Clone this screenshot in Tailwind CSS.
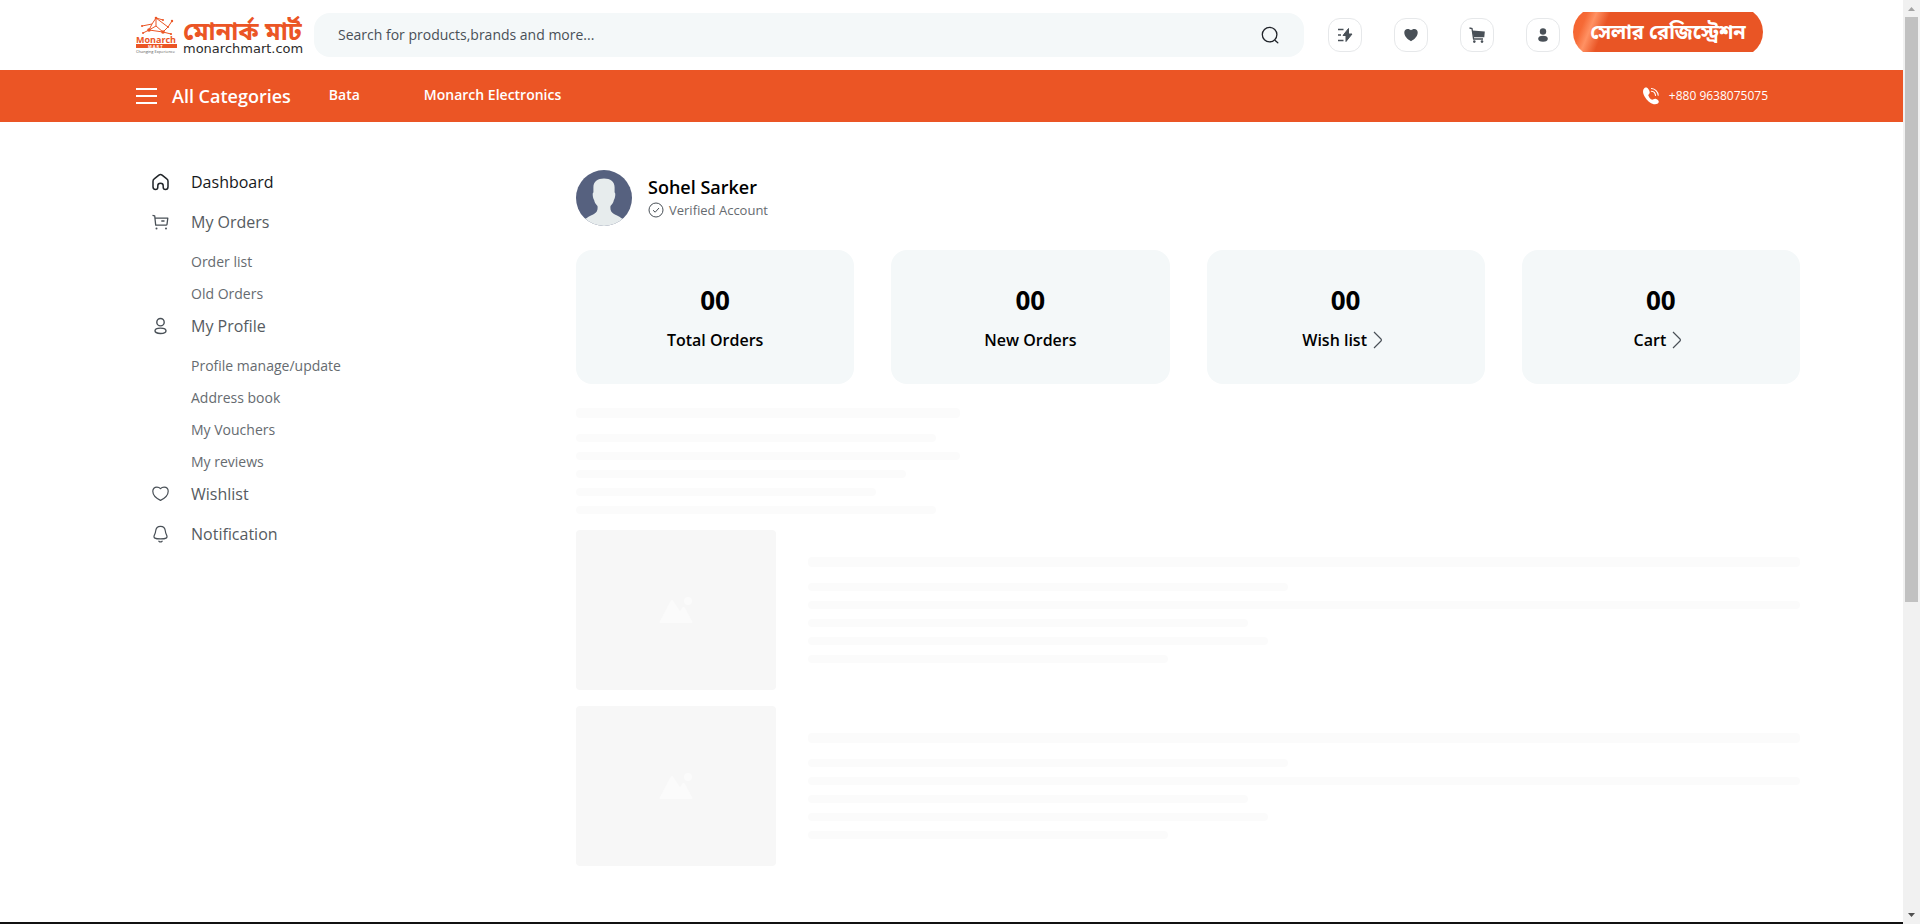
<!DOCTYPE html>
<html lang="en">
<head>
<meta charset="utf-8">
<meta name="viewport" content="width=device-width, initial-scale=1">
<title>Monarch Mart - Dashboard</title>
<script src="https://cdn.jsdelivr.net/npm/@tailwindcss/browser@4"></script>
</head>
<body class="bg-white font-['Open_Sans','Noto_Sans',sans-serif] text-black">
<div class="flex min-h-screen">
  <div class="flex min-w-0 flex-1 flex-col">

    <header class="flex h-[70px] items-center pl-[136px] pr-[140px]">
      <a href="#" aria-label="Monarch Mart home" class="shrink-0">
        <svg width="168" height="40" viewBox="0 0 168 40" class="block overflow-visible">
          <g stroke="#eb5525" fill="none" stroke-width="1">
            <path d="M6 11 L16 9 L20 3 L32 12 L36 6 M16 9 L13 15 L7 18 M13 15 L20 11 L27 17 L32 12 M20 3 L20 11 M27 17 L35 19 M13 15 L27 17 M20 3 L27 5"/>
          </g>
          <g fill="#eb5525">
            <circle cx="6" cy="11" r="1"/><circle cx="20" cy="3" r="1.3"/><circle cx="13" cy="15" r="1.8"/><circle cx="27" cy="17" r="1.8"/><circle cx="36" cy="6" r="1.2"/><circle cx="7" cy="18" r="1"/><circle cx="35" cy="19" r="1.1"/><circle cx="32" cy="12" r="1"/><circle cx="27" cy="5" r="1"/>
            <rect x="0" y="29" width="41" height="4"/>
          </g>
          <text x="0" y="28" font-family="Open Sans" font-size="9" font-weight="700" fill="#eb5525">Monarch</text>
          <text x="12" y="33" font-family="Open Sans" font-size="4" font-weight="700" fill="#fff">M A R T</text>
          <text x="0" y="38" font-family="Open Sans" font-size="4" fill="#555">Changing Experience</text>
          <text x="47" y="25" font-family="Noto Sans Bengali, Noto Sans, sans-serif" font-size="25" font-weight="700" fill="#eb5525">মোনার্ক মার্ট</text>
          <text x="47" y="38" font-family="DejaVu Sans" font-size="13" fill="#2b2b2b">monarchmart.com</text>
        </svg>
      </a>

      <form role="search" class="ml-[10px] flex h-11 min-w-0 flex-1 items-center rounded-2xl bg-[#f4f8f9] pl-6 pr-6">
        <input type="search" aria-label="Search" placeholder="Search for products,brands and more..." class="min-w-0 flex-1 bg-transparent text-sm text-[#495057] outline-none placeholder:text-[#495057]">
        <button type="button" aria-label="Search">
          <svg width="20" height="20" viewBox="0 0 20 20" fill="none" stroke="#1f2329" stroke-width="1.3" stroke-linecap="round" class="block"><circle cx="9.600" cy="9.600" r="7.300"/><path d="M15.200 15.600 L17.800 17.800"/></svg>
        </button>
      </form>

      <div class="ml-6 flex gap-8">
        <button type="button" aria-label="Flash deals" class="flex size-[34px] items-center justify-center rounded-xl border border-[#e6e8ea]">
          <svg width="16" height="16" viewBox="0 0 16 16" class="block"><path d="M11.500 1.500 L6 8.500 H9 V14.500 L15 7 H11.500 Z" fill="#495057" stroke="#495057" stroke-linejoin="round"/><path d="M1 2.500 H6.500 M1 8 H4 M1 13.500 H6.500" stroke="#495057" stroke-width="1.300"/></svg>
        </button>
        <button type="button" aria-label="Wishlist" class="flex size-[34px] items-center justify-center rounded-xl border border-[#e6e8ea]">
          <svg width="16" height="16" viewBox="0 0 16 16" class="block"><path d="M8 14.200 C4 12.200 1.300 9 1.300 5.600 C1.300 3.400 2.700 2 4.700 2 C6 2 7.200 2.600 8 3.300 C8.800 2.600 10 2 11.300 2 C13.300 2 14.700 3.400 14.700 5.600 C14.700 9 12 12.200 8 14.200 Z" fill="#495057"/></svg>
        </button>
        <button type="button" aria-label="Cart" class="flex size-[34px] items-center justify-center rounded-xl border border-[#e6e8ea]">
          <svg width="16" height="16" viewBox="0 0 16 16" class="block"><path d="M0.500 1 L3 1.500 L4.600 12 H14" fill="none" stroke="#495057" stroke-width="1.300"/><path d="M3.500 3.500 L15.800 4.500 L15.300 10.200 H4.500 Z" fill="#495057"/><circle cx="5.300" cy="14.600" r="1.300" fill="#495057"/><circle cx="13" cy="14.600" r="1.300" fill="#495057"/></svg>
        </button>
        <button type="button" aria-label="Account" class="flex size-[34px] items-center justify-center rounded-xl border border-[#e6e8ea]">
          <svg width="16" height="16" viewBox="0 0 16 16" class="block"><circle cx="8" cy="4.500" r="3.200" fill="#495057"/><ellipse cx="8" cy="11.700" rx="4.800" ry="3" fill="#495057"/></svg>
        </button>
      </div>

      <a href="#" class="mb-[6px] ml-[13px] shrink-0" aria-label="Seller registration">
        <svg width="190" height="40" viewBox="0 0 190 40" class="block">
          <defs><linearGradient id="shine" gradientUnits="userSpaceOnUse" x1="0" y1="0" x2="50" y2="20"><stop offset="0" stop-color="#f4602c"/><stop offset="0.250" stop-color="#f66a36"/><stop offset="0.410" stop-color="#ff9163"/><stop offset="0.650" stop-color="#e95525"/></linearGradient></defs>
          <path d="M10 0 H180 A25 25 0 0 1 180 40 H10 A25 25 0 0 1 10 0 Z" fill="url(#shine)"/>
          <text x="95" y="27" text-anchor="middle" font-family="Noto Sans Bengali, Noto Sans, sans-serif" font-size="20" font-weight="700" fill="#fff">সেলার রেজিস্ট্রেশন</text>
        </svg>
      </a>
    </header>

    <nav class="flex h-13 items-center bg-[#eb5525] pl-[136px] pr-[135px] text-white">
      <button type="button" class="flex items-center gap-[15px] text-lg font-semibold">
        <svg width="21" height="18" viewBox="0 0 21 18" stroke="#fff" stroke-width="2"><path d="M0 2H21M0 9H21M0 16H21"/></svg>
        All Categories
      </button>
      <a href="#" class="ml-[38px] pb-[2px] text-sm font-semibold">Bata</a>
      <a href="#" class="ml-16 pb-[2px] text-sm font-semibold">Monarch Electronics</a>
      <a href="tel:+8809638075075" class="ml-auto flex items-center gap-[9px] text-xs font-medium">
        <svg width="18" height="18" viewBox="0 0 18 18" fill="#fff"><path d="M2.800 0.800 C0.600 2.400 0.400 5.600 2.600 9.400 C4.800 13.300 8 16.400 11.700 17.200 C14 17.700 16.300 16.900 16.800 15.100 C17.100 13.800 15.200 12.300 13.600 11.800 C12.200 11.400 11.300 12.600 10.300 12.800 C8.800 12.700 6.400 9.500 6.300 8 C6.600 7.100 7.900 6.700 7.700 5.200 C7.500 3.600 6.200 0.900 4.700 0.500 C4 0.300 3.300 0.500 2.800 0.800 Z"/><path d="M9.500 1.500 C13 1.700 15.900 4.500 16.200 8.200 M9.400 4.300 C11.600 4.500 13.300 6.200 13.500 8.400" fill="none" stroke="#fff" stroke-width="1.100" stroke-linecap="round"/></svg>
        +880 9638075075
      </a>
    </nav>

    <main class="flex flex-1 pt-12 pl-[152px] pr-[103px] pb-14">
      <aside class="w-[424px] shrink-0">
        <ul class="text-base text-[#565b61]">
          <li class="mb-4"><a href="#" class="flex h-6 items-center gap-[22px] text-[#16181b]">
            <svg width="17" height="18" viewBox="0 0 17 18" fill="none" stroke="#212529" stroke-width="1.500" stroke-linejoin="round"><path d="M1 8.300 C1 7.300 1.400 6.500 2.200 5.900 L6.900 2.100 C7.900 1.300 9.100 1.300 10.100 2.100 L14.800 5.900 C15.600 6.500 16 7.300 16 8.300 V13.700 C16 15.600 15.200 16.500 13.500 16.500 C11.900 16.500 11.200 15.700 11.200 14.200 V12.700 C11.200 11.100 10.200 10.300 8.500 10.300 C6.800 10.300 5.800 11.100 5.800 12.700 V14.200 C5.800 15.700 5.100 16.500 3.500 16.500 C1.800 16.500 1 15.600 1 13.700 Z"/></svg>Dashboard</a></li>
          <li class="mb-4"><a href="#" class="flex h-6 items-center gap-[22px]">
            <svg width="17" height="18" viewBox="0 0 17 18" fill="none" stroke="#495057" stroke-width="1.300"><path d="M0.500 2.300 L2.700 2.800 L3.700 12.200 H14 C14.600 12.200 14.900 11.900 15 11.300 L15.800 5.200 H3 M9.300 8 H12.500" stroke-linejoin="round"/><circle cx="4.500" cy="15.400" r="1" fill="#495057" stroke="none"/><circle cx="14" cy="15.400" r="1" fill="#495057" stroke="none"/></svg>My Orders</a></li>
          <li class="mb-2 pl-[39px] text-sm leading-6 text-[#666b70]"><a href="#">Order list</a></li>
          <li class="mb-2 pl-[39px] text-sm leading-6 text-[#666b70]"><a href="#">Old Orders</a></li>
          <li class="mb-4"><a href="#" class="flex h-6 items-center gap-[22px]">
            <svg width="17" height="18" viewBox="0 0 17 18" fill="none" stroke="#495057" stroke-width="1.400"><circle cx="8.500" cy="5.200" r="3.700"/><ellipse cx="8.500" cy="13.800" rx="5.500" ry="2.700"/></svg>My Profile</a></li>
          <li class="mb-2 pl-[39px] text-sm leading-6 text-[#666b70]"><a href="#">Profile manage/update</a></li>
          <li class="mb-2 pl-[39px] text-sm leading-6 text-[#666b70]"><a href="#">Address book</a></li>
          <li class="mb-2 pl-[39px] text-sm leading-6 text-[#666b70]"><a href="#">My Vouchers</a></li>
          <li class="mb-2 pl-[39px] text-sm leading-6 text-[#666b70]"><a href="#">My reviews</a></li>
          <li class="mb-4"><a href="#" class="flex h-6 items-center gap-[22px]">
            <svg width="17" height="18" viewBox="0 0 17 18" fill="none" stroke="#495057" stroke-width="1.200"><path d="M8.500 15.400 C4 13.200 0.800 9.800 0.800 6.300 C0.800 3.800 2.400 2.100 4.900 2.100 C6.400 2.100 7.600 2.700 8.500 3.700 C9.400 2.700 10.600 2.100 12.100 2.100 C14.600 2.100 16.200 3.800 16.200 6.300 C16.200 9.800 13 13.200 8.500 15.400 Z"/></svg>Wishlist</a></li>
          <li><a href="#" class="flex h-6 items-center gap-[22px]">
            <svg width="17" height="18" viewBox="0 0 17 18" fill="none" stroke="#495057" stroke-width="1.200" stroke-linecap="round"><path d="M8.500 1.400 C5.600 1.400 3.900 3.500 3.600 6.200 C3.400 8.400 2.500 9.500 2.100 10.900 C1.600 12.800 2.600 13.900 8.500 13.900 C14.400 13.900 15.400 12.800 14.900 10.900 C14.500 9.500 13.600 8.400 13.400 6.200 C13.100 3.500 11.400 1.400 8.500 1.400 Z M6.900 16.200 C7.800 17 9.200 17 10.100 16.200"/></svg>Notification</a></li>
        </ul>
      </aside>

      <section class="min-w-0 flex-1">
        <div class="flex items-center gap-4">
          <svg width="56" height="56" viewBox="0 0 56 56" role="img" aria-label="Profile picture">
            <defs><clipPath id="round"><circle cx="28" cy="28" r="28"/></clipPath></defs>
            <g clip-path="url(#round)"><rect width="56" height="56" fill="#56617f"/>
            <path d="M28 8.500 C34.500 8.500 38.700 11.500 38.600 17.500 V22.500 C39.900 22.700 39.200 28 37.900 30 C37.300 32.800 36 34.500 34.500 36 C34 40 35 42.300 38 44 C42 46 43 46.500 47 49 V58 H9 V49 C13 46.500 14 46 18 44 C21 42.300 22 40 21.500 36 C20 34.500 18.700 32.800 18.100 30 C16.800 28 16.100 22.700 17.400 22.500 V17.500 C17.300 11.500 21.500 8.500 28 8.500 Z" fill="#e7eced"/></g>
          </svg>
          <div>
            <h1 class="text-lg leading-6 font-semibold">Sohel Sarker</h1>
            <p class="flex items-center gap-[5px] text-[13px] leading-[22px] text-[#666b70]">
              <svg width="16" height="16" viewBox="0 0 16 16" fill="none" stroke="#495057"><circle cx="8" cy="8" r="7"/><path d="M5 8.200 L7.200 10.200 L11 6"/></svg>Verified Account</p>
          </div>
        </div>

        <div class="mt-6 grid grid-cols-4 gap-[37px] text-center">
          <div class="flex h-[134px] flex-col items-center justify-center rounded-2xl bg-[#f4f8f9]">
            <p class="text-[26px] leading-9 font-bold">00</p><p class="mt-[10px] leading-6 font-semibold">Total Orders</p></div>
          <div class="flex h-[134px] flex-col items-center justify-center rounded-2xl bg-[#f4f8f9]">
            <p class="text-[26px] leading-9 font-bold">00</p><p class="mt-[10px] leading-6 font-semibold">New Orders</p></div>
          <a href="#" class="flex h-[134px] flex-col items-center justify-center rounded-2xl bg-[#f4f8f9]">
            <span class="text-[26px] leading-9 font-bold">00</span><span class="mt-[10px] flex items-center gap-[6px] pr-[6px] pb-[1px] leading-6 font-semibold">Wish list<svg width="10" height="18" viewBox="0 0 10 18" fill="none" stroke="#495057" stroke-width="1.200"><path d="M1 1 L8 8 Q9 9 8 10 L1 17"/></svg></span></a>
          <a href="#" class="flex h-[134px] flex-col items-center justify-center rounded-2xl bg-[#f4f8f9]">
            <span class="text-[26px] leading-9 font-bold">00</span><span class="mt-[10px] flex items-center gap-[6px] pr-[6px] pb-[1px] leading-6 font-semibold">Cart<svg width="10" height="18" viewBox="0 0 10 18" fill="none" stroke="#495057" stroke-width="1.200"><path d="M1 1 L8 8 Q9 9 8 10 L1 17"/></svg></span></a>
        </div>

        <div class="mt-6 flex w-96 flex-col gap-[10px]" aria-hidden="true">
          <div class="mb-[6px] h-[10px] rounded bg-[#fbfbfb]"></div>
          <div class="h-2 w-[360px] rounded bg-[#fbfbfb]"></div>
          <div class="h-2 rounded bg-[#fbfbfb]"></div>
          <div class="h-2 w-[330px] rounded bg-[#fbfbfb]"></div>
          <div class="h-2 w-[300px] rounded bg-[#fbfbfb]"></div>
          <div class="h-2 w-[360px] rounded bg-[#fbfbfb]"></div>
        </div>

        <div class="mt-4 flex items-center gap-8" aria-hidden="true">
          <div class="flex h-40 w-[200px] shrink-0 items-center justify-center rounded bg-[#f7f7f7]">
            <svg width="34" height="28" viewBox="0 0 34 28" fill="#fbfbfb"><path d="M2 27 Q0 27 1 25 L11 6 Q13 2 15 6 L21 15 L23 12 Q24.500 10 26 12 L33 25 Q34 27 32 27 Z"/><circle cx="29" cy="5" r="4"/></svg>
          </div>
          <div class="flex flex-1 flex-col gap-[10px]">
            <div class="mb-[6px] h-[10px] rounded bg-[#fbfbfb]"></div>
            <div class="h-2 w-[480px] rounded bg-[#fbfbfb]"></div>
            <div class="h-2 rounded bg-[#fbfbfb]"></div>
            <div class="h-2 w-[440px] rounded bg-[#fbfbfb]"></div>
            <div class="h-2 w-[460px] rounded bg-[#fbfbfb]"></div>
            <div class="h-2 w-[360px] rounded bg-[#fbfbfb]"></div>
          </div>
        </div>

        <div class="mt-4 flex items-center gap-8" aria-hidden="true">
          <div class="flex h-40 w-[200px] shrink-0 items-center justify-center rounded bg-[#f7f7f7]">
            <svg width="34" height="28" viewBox="0 0 34 28" fill="#fbfbfb"><path d="M2 27 Q0 27 1 25 L11 6 Q13 2 15 6 L21 15 L23 12 Q24.500 10 26 12 L33 25 Q34 27 32 27 Z"/><circle cx="29" cy="5" r="4"/></svg>
          </div>
          <div class="flex flex-1 flex-col gap-[10px]">
            <div class="mb-[6px] h-[10px] rounded bg-[#fbfbfb]"></div>
            <div class="h-2 w-[480px] rounded bg-[#fbfbfb]"></div>
            <div class="h-2 rounded bg-[#fbfbfb]"></div>
            <div class="h-2 w-[440px] rounded bg-[#fbfbfb]"></div>
            <div class="h-2 w-[460px] rounded bg-[#fbfbfb]"></div>
            <div class="h-2 w-[360px] rounded bg-[#fbfbfb]"></div>
          </div>
        </div>
      </section>
    </main>

    <footer class="h-[2px] bg-[#111111]"></footer>
  </div>

  <div class="flex w-[17px] shrink-0 flex-col items-center bg-[#f1f1f1]" aria-hidden="true">
    <svg width="17" height="17" viewBox="0 0 17 17" class="shrink-0"><path d="M5 11 L8.500 7 L12 11 Z" fill="#a3a3a3"/></svg>
    <div class="min-h-0 w-full flex-1 px-[2px]"><div class="h-[585px] bg-[#c1c1c1]"></div></div>
    <svg width="17" height="17" viewBox="0 0 17 17" class="shrink-0"><path d="M5 6 L12 6 L8.500 10 Z" fill="#505050"/></svg>
  </div>
</div>
</body>
</html>
